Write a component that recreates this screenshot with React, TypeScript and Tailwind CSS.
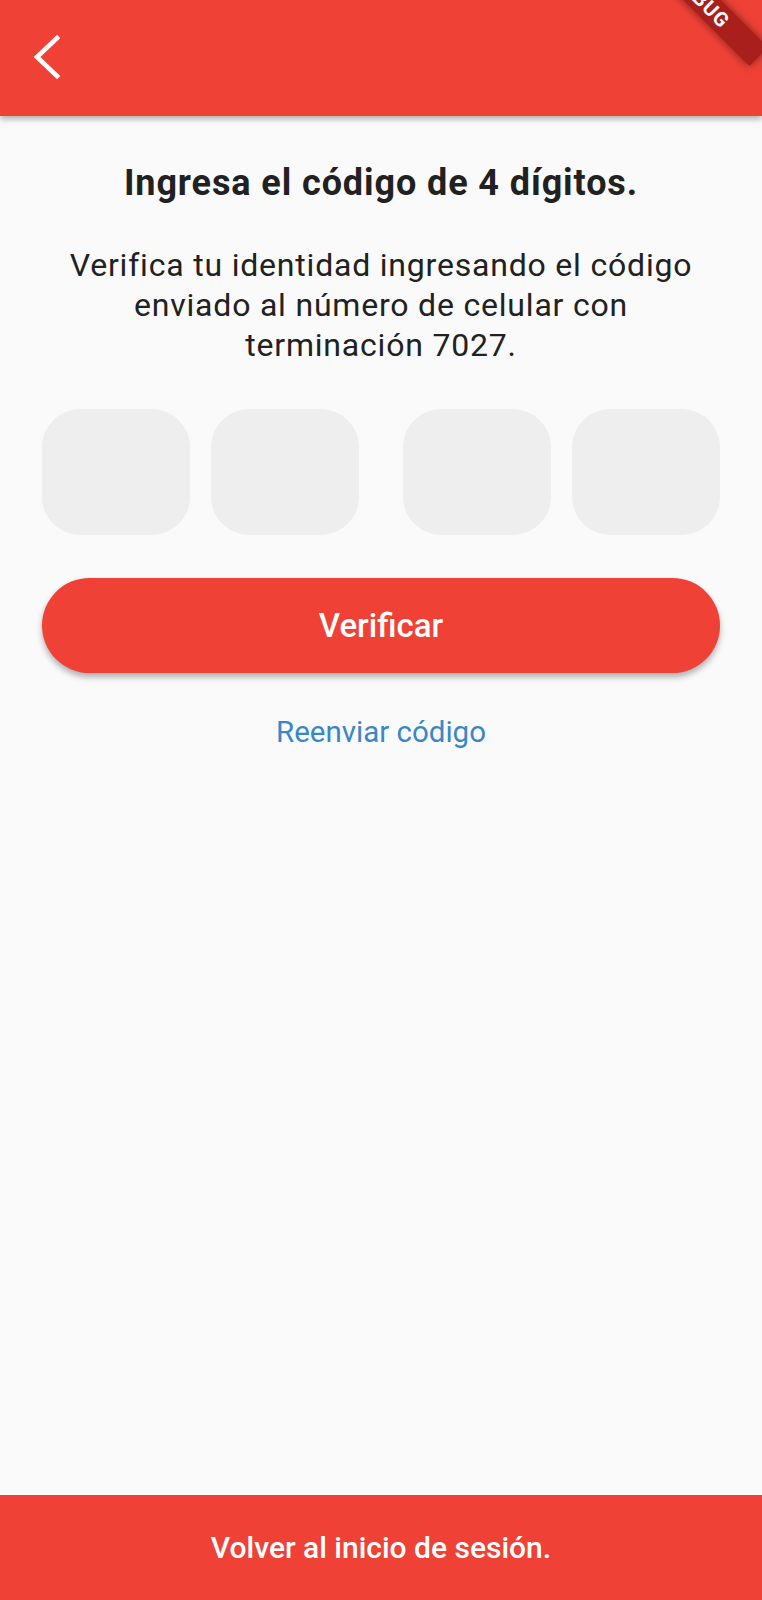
import React from "react";

const font = { fontFamily: "Roboto, 'Noto Sans', Arial, sans-serif" };

function DebugBanner() {
  return (
    <div className="pointer-events-none absolute right-0 top-0 h-[120px] w-[120px] overflow-hidden">
      <div className="absolute left-[-20px] top-[-13px] flex h-[26px] w-[160px] rotate-45 items-center justify-center bg-[#a91f1b] text-[20px] font-bold tracking-[1px] text-white shadow-[0_0_8px_rgba(0,0,0,0.5)]">
        DEBUG
      </div>
    </div>
  );
}

export default function App() {
  const boxes = [0, 1, 2, 3];

  return (
    <div className="relative flex min-h-[1600px] flex-col bg-[#fafafa]" style={font}>
      <header className="relative z-10 flex h-[116px] items-start bg-[#ef4136] shadow-[0_3px_6px_rgba(0,0,0,0.3)]">
        <button type="button" aria-label="Volver" className="ml-[30px] mt-[33px] flex h-[48px] w-[34px] items-center justify-center">
          <svg width="30" height="48" viewBox="0 0 30 48" fill="none">
            <polyline points="25,5 5,24 25,43" stroke="white" strokeWidth="4.6" strokeLinecap="square" strokeLinejoin="miter" />
          </svg>
        </button>
        <DebugBanner />
      </header>

      <main className="flex flex-1 flex-col items-center px-[42px] pt-[47px]">
        <h1 className="whitespace-nowrap text-center text-[36px] font-bold leading-[40px] tracking-[0.9px] text-[#212121]">
          Ingresa el código de 4 dígitos.
        </h1>
        <p className="mt-[42px] whitespace-nowrap text-center text-[32px] leading-[40px] tracking-[0.8px] text-[#212121]">
          Verifica tu identidad ingresando el código
          <br />
          enviado al número de celular con
          <br />
          terminación 7027.
        </p>

        <div className="mt-[44px] flex w-full justify-between">
          <div className="flex gap-[21px]">
            {boxes.slice(0, 2).map((b) => (
              <div key={b} className="h-[126px] w-[148px] rounded-[38px] bg-[#eeeeee]" />
            ))}
          </div>
          <div className="flex gap-[21px]">
            {boxes.slice(2).map((b) => (
              <div key={b} className="h-[126px] w-[148px] rounded-[38px] bg-[#eeeeee]" />
            ))}
          </div>
        </div>

        <button
          type="button"
          className="mt-[43px] flex h-[95px] w-full items-center justify-center rounded-full bg-[#ef4136] text-[33px] font-medium text-white shadow-[0_4px_6px_rgba(0,0,0,0.3)]"
        >
          Verificar
        </button>

        <button type="button" className="mt-[42px] text-[29.5px] leading-[34px] text-[#3a86c6]">
          Reenviar código
        </button>
      </main>

      <footer className="flex h-[105px] items-center justify-center bg-[#ef4136]">
        <span className="text-[30px] font-medium text-white">Volver al inicio de sesión.</span>
      </footer>
    </div>
  );
}
